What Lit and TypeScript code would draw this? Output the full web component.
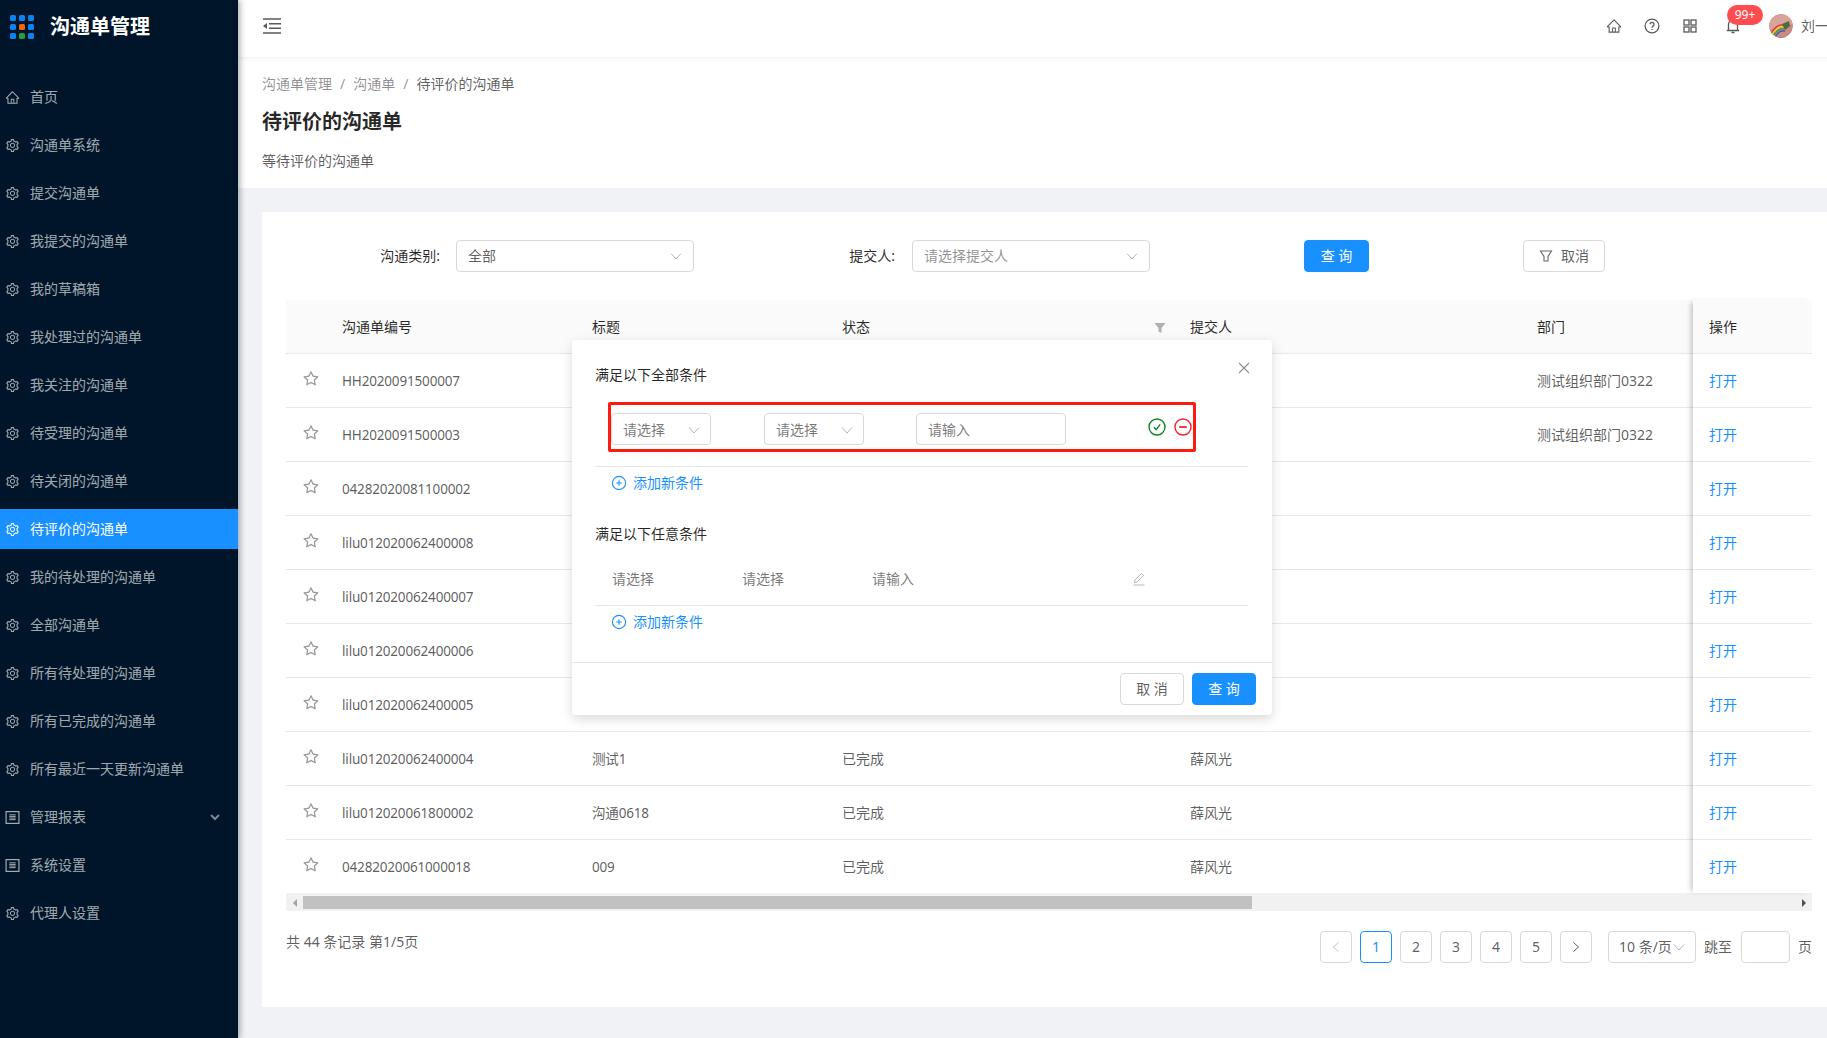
import { LitElement, html, css } from "lit";
import { customElement } from "lit/decorators.js";

const HOME = "M946.5 505L560.1 118.8l-25.9-25.9a31.5 31.5 0 0 0-44.4 0L77.5 505a63.9 63.9 0 0 0-18.8 46c.4 35.2 29.7 63.3 64.9 63.3h42.5V940h691.8V614.3h43.4c17.1 0 33.2-6.7 45.3-18.8a63.6 63.6 0 0 0 18.7-45.3c0-17-6.7-33.1-18.8-45.2zM568 868H456V664h112v204zm217.9-325.7V868H632V640c0-22.1-17.9-40-40-40H432c-22.1 0-40 17.9-40 40v228H238.1V542.3h-96l370-369.7 23.1 23.1L882 542.3h-96.1z";
const SETTING = "M924.8 625.7l-65.5-56c3.1-19 4.7-38.4 4.7-57.8s-1.6-38.8-4.7-57.8l65.5-56a32.03 32.03 0 0 0 9.3-35.2l-.9-2.6a443.74 443.74 0 0 0-79.7-137.9l-1.8-2.1a32.12 32.12 0 0 0-35.1-9.5l-81.3 28.9c-30-24.6-63.5-44-99.7-57.6l-15.7-85a32.05 32.05 0 0 0-25.8-25.7l-2.7-.5c-52.1-9.4-106.9-9.4-159 0l-2.7.5a32.05 32.05 0 0 0-25.8 25.7l-15.8 85.4a351.86 351.86 0 0 0-99 57.4l-81.9-29.1a32 32 0 0 0-35.1 9.5l-1.8 2.1a446.02 446.02 0 0 0-79.7 137.9l-.9 2.6c-4.5 12.5-.8 26.5 9.3 35.2l66.3 56.6c-3.1 18.8-4.6 38-4.6 57.1 0 19.2 1.5 38.4 4.6 57.1L99 625.5a32.03 32.03 0 0 0-9.3 35.2l.9 2.6c18.1 50.4 44.9 96.9 79.7 137.9l1.8 2.1a32.12 32.12 0 0 0 35.1 9.5l81.9-29.1c29.8 24.5 63.1 43.9 99 57.4l15.8 85.4a32.05 32.05 0 0 0 25.8 25.7l2.7.5a449.4 449.4 0 0 0 159 0l2.7-.5a32.05 32.05 0 0 0 25.8-25.7l15.7-85a350 350 0 0 0 99.7-57.6l81.3 28.9a32 32 0 0 0 35.1-9.5l1.8-2.1c34.8-41.1 61.6-87.5 79.7-137.9l.9-2.6c4.5-12.3.8-26.3-9.3-35zM788.3 465.9c2.5 15.1 3.8 30.6 3.8 46.1s-1.3 31-3.8 46.1l-6.6 40.1 74.7 63.9a370.03 370.03 0 0 1-42.6 73.6L721 702.8l-31.4 25.8c-23.9 19.6-50.5 35-79.3 45.8l-38.1 14.3-17.9 97a377.5 377.5 0 0 1-85 0l-17.9-97.2-37.8-14.5c-28.5-10.8-55-26.2-78.7-45.7l-31.4-25.9-93.4 33.2c-17-22.9-31.2-47.6-42.6-73.6l75.5-64.5-6.5-40c-2.4-14.9-3.7-30.3-3.7-45.5 0-15.3 1.2-30.6 3.7-45.5l6.5-40-75.5-64.5c11.3-26.1 25.6-50.7 42.6-73.6l93.4 33.2 31.4-25.9c23.7-19.5 50.2-34.9 78.7-45.7l37.9-14.3 17.9-97.2c28.1-3.2 56.8-3.2 85 0l17.9 97 38.1 14.3c28.7 10.8 55.4 26.2 79.3 45.8l31.4 25.8 92.8-32.9c17 22.9 31.2 47.6 42.6 73.6L781.8 426l6.5 39.9zM512 326c-97.2 0-176 78.8-176 176s78.8 176 176 176 176-78.8 176-176-78.8-176-176-176zm79.2 255.2A111.6 111.6 0 0 1 512 614c-29.9 0-58-11.7-79.2-32.8A111.6 111.6 0 0 1 400 502c0-29.9 11.7-58 32.8-79.2C454 401.6 482.1 390 512 390c29.9 0 58 11.6 79.2 32.8A111.6 111.6 0 0 1 624 502c0 29.9-11.7 58-32.8 79.2z";
const STAR = "M908.1 353.1l-253.9-36.9L540.7 86.1c-3.1-6.3-8.2-11.4-14.5-14.5-15.8-7.8-35-1.3-42.9 14.5L369.8 316.2l-253.9 36.9c-7 1-13.4 4.3-18.3 9.3a32.05 32.05 0 0 0 .6 45.3l183.7 179.1-43.4 252.9a31.95 31.95 0 0 0 46.4 33.7L512 754l227.1 119.4c6.2 3.3 13.4 4.4 20.3 3.2 17.4-3 29.1-19.5 26.1-36.9l-43.4-252.9 183.7-179.1c5-4.9 8.3-11.3 9.3-18.3 2.7-17.5-9.5-33.7-27-36.3zM664.8 561.6l36.1 210.3L512 672.7 323.1 772l36.1-210.3-152.8-149L417.6 382 512 190.7 606.4 382l211.2 30.7-152.8 148.9z";

const ant = (d: string, cls: string) => html`<svg class=${cls} viewBox="0 0 1024 1024"><path d=${d}></path></svg>`;

const chev = () => html`<svg class="chev" viewBox="0 0 12 12"><path d="M1 3.5 L6 9 L11 3.5"></path></svg>`;
const addIcon = () => html`<svg class="add-ic" viewBox="0 0 16 16"><circle cx="8" cy="8" r="6.6"></circle><path d="M8 5.2 V10.8 M5.2 8 H10.8"></path></svg>`;
const sheet = () => html`<svg class="side-ic" viewBox="0 0 14 14"><rect x="1" y="1.5" width="12" height="11" fill="none" stroke="currentColor" stroke-width="1.1"></rect><path d="M4 4.5H10M4 6H10M4 7.5H10M4 9H10" stroke="currentColor" stroke-width=".9" fill="none"></path></svg>`;

const MENU: { t: string; icon: string; active?: boolean; more?: boolean }[] = [
  { t: "首页", icon: "home" },
  { t: "沟通单系统", icon: "gear" },
  { t: "提交沟通单", icon: "gear" },
  { t: "我提交的沟通单", icon: "gear" },
  { t: "我的草稿箱", icon: "gear" },
  { t: "我处理过的沟通单", icon: "gear" },
  { t: "我关注的沟通单", icon: "gear" },
  { t: "待受理的沟通单", icon: "gear" },
  { t: "待关闭的沟通单", icon: "gear" },
  { t: "待评价的沟通单", icon: "gear", active: true },
  { t: "我的待处理的沟通单", icon: "gear" },
  { t: "全部沟通单", icon: "gear" },
  { t: "所有待处理的沟通单", icon: "gear" },
  { t: "所有已完成的沟通单", icon: "gear" },
  { t: "所有最近一天更新沟通单", icon: "gear" },
  { t: "管理报表", icon: "sheet", more: true },
  { t: "系统设置", icon: "sheet" },
  { t: "代理人设置", icon: "gear" },
];

const ROWS = [
  { id: "HH2020091500007", title: "", status: "", user: "", dept: "测试组织部门0322" },
  { id: "HH2020091500003", title: "", status: "", user: "", dept: "测试组织部门0322" },
  { id: "04282020081100002", title: "", status: "", user: "", dept: "" },
  { id: "lilu012020062400008", title: "", status: "", user: "", dept: "" },
  { id: "lilu012020062400007", title: "", status: "", user: "", dept: "" },
  { id: "lilu012020062400006", title: "", status: "", user: "", dept: "" },
  { id: "lilu012020062400005", title: "", status: "", user: "", dept: "" },
  { id: "lilu012020062400004", title: "测试1", status: "已完成", user: "薛风光", dept: "" },
  { id: "lilu012020061800002", title: "沟通0618", status: "已完成", user: "薛风光", dept: "" },
  { id: "04282020061000018", title: "009", status: "已完成", user: "薛风光", dept: "" },
];

@customElement("app-root")
export class AppRoot extends LitElement {
  static styles = css`
    :host {
      display: flex;
      width: 1827px;
      height: 1038px;
      overflow: hidden;
      background: #f0f2f5;
      font-family: "Noto Sans", "Noto Sans CJK SC", sans-serif;
      font-size: 14px;
      line-height: 22px;
      color: rgba(0, 0, 0, 0.65);
    }
    svg { display: block; flex: none; }

    .side {
      flex: 0 0 238px;
      height: 1038px;
      background: #001529;
      box-shadow: 2px 0 6px rgba(0, 21, 41, 0.35);
      position: relative;
      z-index: 2;
    }
    .logo { display: flex; align-items: center; height: 54px; padding-left: 10px; }
    .dots { display: grid; grid-template-columns: repeat(3, 6px); gap: 3px; }
    .dots i { display: block; width: 6px; height: 6px; border-radius: 1.5px; background: #0a84f0; }
    .dots i.o { background: #f0640a; }
    .dots i.g { background: #1fa03a; }
    .logo b { margin-left: 16px; font-size: 20px; line-height: 28px; font-weight: 700; color: #fff; }
    .menu { padding-top: 23px; }
    .mi {
      display: flex;
      align-items: center;
      height: 40px;
      margin-bottom: 8px;
      padding-left: 5px;
      color: rgba(255, 255, 255, 0.65);
    }
    .mi.on { background: #1890ff; color: #fff; }
    .mi span { margin-left: 10px; flex: 1; }
    .side-ic { width: 15px; height: 15px; fill: currentColor; }
    .mi .down { width: 10px; height: 10px; margin-right: 18px; fill: none; stroke: currentColor; stroke-width: 2; opacity: 0.75; }

    .main { flex: 0 0 1622px; display: flex; flex-direction: column; }
    .top {
      height: 57px;
      box-sizing: border-box;
      background: #fff;
      box-shadow: 0 1px 4px rgba(0, 21, 41, 0.08);
      display: flex;
      align-items: center;
      padding: 0 31px 6px 25px;
      position: relative;
      z-index: 1;
      flex: none;
    }
    .fold { width: 18px; height: 16px; }
    .fold path { fill: none; stroke: #595959; stroke-width: 1.6; }
    .fold polygon { fill: #595959; }
    .tools { margin-left: auto; display: flex; align-items: center; color: rgba(0, 0, 0, 0.65); }
    .tb { width: 38px; height: 38px; display: flex; align-items: center; justify-content: center; position: relative; }
    .tb svg { width: 16px; height: 16px; fill: currentColor; }
    .tb.bell { margin-left: 5px; }
    .stroke { fill: none !important; stroke: currentColor; stroke-width: 1.3; }
    .badge {
      position: absolute;
      left: 13px;
      top: -2px;
      width: 36px;
      height: 20px;
      border-radius: 10px;
      background: #ff4d4f;
      color: #fff;
      font-size: 12px;
      line-height: 20px;
      text-align: center;
    }
    .avatar { width: 24px; height: 24px; border-radius: 50%; margin-left: 17px; }
    .uname { margin-left: 8px; }

    .head { background: #fff; padding: 16px 24px; height: 131px; box-sizing: border-box; flex: none; }
    .crumb { line-height: 22px; color: rgba(0, 0, 0, 0.45); display: flex; }
    .crumb i { font-style: normal; margin: 0 8px; }
    .crumb em { font-style: normal; color: rgba(0, 0, 0, 0.65); }
    .head h1 { margin: 13px 0 0; font-size: 20px; line-height: 28px; font-weight: 600; color: rgba(0, 0, 0, 0.85); }
    .head p { margin: 14px 0 0; line-height: 22px; }

    .card {
      margin: 24px;
      height: 795px;
      box-sizing: border-box;
      padding: 28px 24px 0;
      background: #fff;
      position: relative;
    }
    .filter { display: flex; align-items: center; height: 32px; margin-bottom: 28px; }
    .flabel { text-align: right; color: rgba(0, 0, 0, 0.85); }
    .fl1 { width: 154px; margin-right: 16px; word-spacing: 1px; }
    .fl2 { width: 201px; margin-right: 17px; }
    .sel {
      display: flex;
      align-items: center;
      justify-content: space-between;
      height: 32px;
      box-sizing: border-box;
      border: 1px solid #d9d9d9;
      border-radius: 4px;
      padding: 0 11px;
      background: #fff;
    }
    .sel.big { width: 238px; }
    .sel.ph { color: rgba(0, 0, 0, 0.45); }
    .chev { width: 12px; height: 12px; fill: none; stroke: rgba(0, 0, 0, 0.3); stroke-width: 1; }
    .btn {
      height: 32px;
      box-sizing: border-box;
      border-radius: 4px;
      display: flex;
      align-items: center;
      justify-content: center;
      border: 1px solid #d9d9d9;
      background: #fff;
    }
    .btn.pri { background: #1890ff; border-color: #1890ff; color: #fff; }
    .q1 { width: 65px; margin-left: 154px; }
    .c1 { width: 82px; margin-left: 154px; gap: 8px; }
    .funnel { width: 14px; height: 14px; fill: none; stroke: rgba(0, 0, 0, 0.6); stroke-width: 1.1; }

    .table { display: flex; }
    .tmain { flex: 0 0 1407px; }
    .tfix { flex: 0 0 119px; box-shadow: -4px 0 5px -2px rgba(0, 0, 0, 0.22); position: relative; }
    .row {
      display: grid;
      grid-template-columns: 56px 250px 250px 348px 347px 156px;
      height: 54px;
      box-sizing: border-box;
      border-bottom: 1px solid #e8e8e8;
      align-items: center;
    }
    .tfix .row { grid-template-columns: 1fr; padding-left: 16px; }
    .row.hd { background: #fafafa; color: rgba(0, 0, 0, 0.85); }
    .tbody .row:last-child { border-bottom: 0; height: 53px; }
    .star { width: 18px; height: 18px; fill: #999; margin: -4px 0 0 16px; }
    .lat { font-size: 13.5px; letter-spacing: -0.17px; }
    .flt { display: flex; align-items: center; justify-content: space-between; padding-right: 24px; }
    .flt svg { width: 12px; height: 12px; fill: #b0b0b0; margin-top: 2px; }
    a.open { color: #1890ff; text-decoration: none; }

    .sbar { display: flex; align-items: stretch; height: 18px; box-sizing: border-box; padding: 3px 0 2px; background: #f1f1f1; }
    .sbar .arr { flex: 0 0 17px; display: flex; align-items: center; justify-content: center; }
    .sbar .arr svg { width: 6px; height: 8px; fill: #505050; }
    .sbar .arr.l svg { fill: #a3a3a3; }
    .sbar .thumb { flex: 0 0 949px; background: #c1c1c1; }
    .sbar .sp { flex: 1; }

    .pager { display: flex; align-items: flex-start; margin-top: 20px; }
    .total { line-height: 22px; }
    .pgs { margin-left: auto; display: flex; align-items: center; height: 32px; }
    .pg {
      width: 32px;
      height: 32px;
      box-sizing: border-box;
      border: 1px solid #d9d9d9;
      border-radius: 4px;
      margin-right: 8px;
      display: flex;
      align-items: center;
      justify-content: center;
    }
    .pg.cur { border-color: #1890ff; color: #1890ff; }
    .pg svg { width: 10px; height: 12px; fill: none; stroke: rgba(0, 0, 0, 0.65); stroke-width: 1; }
    .pg.dis svg { stroke: rgba(0, 0, 0, 0.25); }
    .pg.nx { margin-right: 16px; }
    .size {
      width: 88px;
      height: 32px;
      box-sizing: border-box;
      border: 1px solid #d9d9d9;
      border-radius: 4px;
      display: flex;
      align-items: center;
      padding-left: 10px;
      white-space: nowrap;
    }
    .size .chev { margin-left: 1px; }
    .jump { margin-left: 8px; }
    .jbox { width: 49px; height: 32px; box-sizing: border-box; border: 1px solid #d9d9d9; border-radius: 4px; margin: 0 8px 0 9px; }

    .pop {
      position: absolute;
      left: 310px;
      top: 128px;
      width: 700px;
      background: #fff;
      border-radius: 4px;
      box-shadow: 0 4px 12px rgba(0, 0, 0, 0.15);
      z-index: 3;
      box-sizing: border-box;
      padding-top: 24px;
    }
    .x { position: absolute; left: 666px; top: 22px; width: 12px; height: 12px; fill: none; stroke: rgba(0, 0, 0, 0.45); stroke-width: 1.1; }
    .pb { padding-left: 23px; }
    .pop h3 { margin: 0; font-size: 14px; line-height: 22px; font-weight: 400; color: rgba(0, 0, 0, 0.85); }
    .pop h3.second { margin-top: 24px; }
    .redbox {
      margin: 16px 0 14px 13px;
      width: 588px;
      height: 50px;
      box-sizing: border-box;
      border: 3px solid #ff1a10;
      border-radius: 2px;
      display: flex;
      align-items: center;
      padding-top: 4px;
    }
    .sel.sm { width: 100px; margin-right: 53px; padding: 1px 10px 0 11px; color: rgba(0, 0, 0, 0.55); }
    .sel.sm2 { margin-right: 52px; }
    .inp {
      width: 150px;
      height: 32px;
      box-sizing: border-box;
      border: 1px solid #d9d9d9;
      border-radius: 4px;
      padding: 1px 0 0 11px;
      line-height: 30px;
      color: rgba(0, 0, 0, 0.55);
      margin-right: 82px;
    }
    .ok, .del { width: 18px; height: 18px; fill: none; stroke-width: 1.4; margin-top: -4px; }
    .ok { stroke: #14861f; }
    .del { stroke: #f5222d; margin-left: 8px; }
    .pdiv { width: 653px; height: 1px; background: #e8e8e8; }
    .add { display: flex; align-items: center; height: 32px; padding-left: 16px; color: #1890ff; gap: 6px; }
    .add-ic { width: 16px; height: 16px; fill: none; stroke: #1890ff; stroke-width: 1.1; }
    .cond {
      display: grid;
      grid-template-columns: 130px 130px 260px auto;
      align-items: center;
      padding: 23px 0 15px 17px;
      line-height: 22px;
      color: rgba(0, 0, 0, 0.55);
    }
    .pen { width: 14px; height: 14px; fill: none; stroke: rgba(0, 0, 0, 0.28); stroke-width: 1; }
    .pf {
      margin-top: 24px;
      border-top: 1px solid #e8e8e8;
      padding: 10px 16px 10px 0;
      display: flex;
      justify-content: flex-end;
      gap: 8px;
    }
    .pf .btn { width: 64px; }
  `;

  private menu() {
    return MENU.map(
      (m) => html`<div class="mi ${m.active ? "on" : ""}">
        ${m.icon === "home" ? ant(HOME, "side-ic") : m.icon === "gear" ? ant(SETTING, "side-ic") : sheet()}
        <span>${m.t}</span>
        ${m.more ? html`<svg class="down" viewBox="0 0 10 10"><path d="M1 3 L5 7 L9 3"></path></svg>` : ""}
      </div>`
    );
  }

  render() {
    return html`
      <aside class="side">
        <div class="logo">
          <div class="dots"><i></i><i></i><i></i><i></i><i class="o"></i><i></i><i></i><i class="g"></i><i></i></div>
          <b>沟通单管理</b>
        </div>
        <nav class="menu">${this.menu()}</nav>
      </aside>
      <div class="main">
        <header class="top">
          <svg class="fold" viewBox="0 0 18 16">
            <path d="M0 1H18M6 5.7H18M6 10.3H18M0 15H18"></path>
            <polygon points="0,8 4,5 4,11"></polygon>
          </svg>
          <div class="tools">
            <div class="tb">${ant(HOME, "")}</div>
            <div class="tb">
              <svg class="stroke" viewBox="0 0 16 16"><circle cx="8" cy="8" r="6.9"></circle><path d="M6 6.3a2 2 0 1 1 3 1.8c-.7.4-1 .8-1 1.6M8 11v1"></path></svg>
            </div>
            <div class="tb">
              <svg class="stroke" viewBox="0 0 16 16"><rect x="2" y="2" width="5" height="5"></rect><rect x="9" y="2" width="5" height="5"></rect><rect x="2" y="9" width="5" height="5"></rect><rect x="9" y="9" width="5" height="5"></rect></svg>
            </div>
            <div class="tb bell">
              <svg class="stroke" viewBox="0 0 16 16"><path d="M3.5 12.5V6.5a4.5 4.5 0 0 1 9 0v6M1.8 12.5H14.2M6.5 14.5h3"></path></svg>
              <span class="badge">99+</span>
            </div>
            <svg class="avatar" viewBox="0 0 24 24">
              <defs><clipPath id="av"><circle cx="12" cy="12" r="12"></circle></clipPath></defs>
              <g clip-path="url(#av)" fill="none">
                <rect width="24" height="24" fill="#c98a84"></rect>
                <path d="M0 0H24V10L0 16Z" fill="#d8a39c"></path>
                <path d="M2 20Q7 10 14 11" stroke="#e03030" stroke-width="1.3"></path>
                <path d="M3 21Q8 12 15 13" stroke="#f0d020" stroke-width="1.3"></path>
                <path d="M4 22Q9 14 15 15" stroke="#2f9e44" stroke-width="1.3"></path>
                <path d="M6 23Q10 16 16 17" stroke="#3050c0" stroke-width="1.3"></path>
                <path d="M13 10L20 7L21 12L16 16Z" fill="#4f6b3a"></path>
                <path d="M8 23H24V24H8Z" fill="#b56f80"></path>
              </g>
            </svg>
            <span class="uname">刘一</span>
          </div>
        </header>

        <section class="head">
          <div class="crumb">沟通单管理<i>/</i>沟通单<i>/</i><em>待评价的沟通单</em></div>
          <h1>待评价的沟通单</h1>
          <p>等待评价的沟通单</p>
        </section>

        <section class="card">
          <div class="filter">
            <label class="flabel fl1">沟通类别:</label>
            <div class="sel big">全部${chev()}</div>
            <label class="flabel fl2">提交人:</label>
            <div class="sel big ph">请选择提交人${chev()}</div>
            <div class="btn pri q1">查 询</div>
            <div class="btn c1">
              <svg class="funnel" viewBox="0 0 14 14"><path d="M1.5 2H12.5L9 7.5V12H5V7.5Z"></path></svg>取消
            </div>
          </div>

          <div class="table">
            <div class="tmain">
              <div class="row hd">
                <div></div><div>沟通单编号</div><div>标题</div>
                <div class="flt">状态<svg viewBox="0 0 12 12"><path d="M0.5 1H11.5L7.5 6V11L4.5 9.5V6Z"></path></svg></div>
                <div>提交人</div><div>部门</div>
              </div>
              <div class="tbody">
                ${ROWS.map(
                  (r) => html`<div class="row">
                    ${ant(STAR, "star")}
                    <div class="lat">${r.id}</div><div class="lat">${r.title}</div><div>${r.status}</div><div>${r.user}</div><div>${r.dept}</div>
                  </div>`
                )}
              </div>
            </div>
            <div class="tfix">
              <div class="row hd"><div>操作</div></div>
              <div class="tbody">${ROWS.map(() => html`<div class="row"><a class="open">打开</a></div>`)}</div>
            </div>
          </div>

          <div class="sbar">
            <div class="arr l"><svg viewBox="0 0 6 8"><path d="M5 0V8L1 4Z"></path></svg></div>
            <div class="thumb"></div>
            <div class="sp"></div>
            <div class="arr"><svg viewBox="0 0 6 8"><path d="M1 0V8L5 4Z"></path></svg></div>
          </div>

          <div class="pager">
            <div class="total">共 44 条记录 第1/5页</div>
            <div class="pgs">
              <div class="pg dis"><svg viewBox="0 0 10 12"><path d="M7.5 1.5 L2.5 6 L7.5 10.5"></path></svg></div>
              <div class="pg cur">1</div>
              <div class="pg">2</div>
              <div class="pg">3</div>
              <div class="pg">4</div>
              <div class="pg">5</div>
              <div class="pg nx"><svg viewBox="0 0 10 12"><path d="M2.5 1.5 L7.5 6 L2.5 10.5"></path></svg></div>
              <div class="size">10 条/页${chev()}</div>
              <span class="jump">跳至</span>
              <div class="jbox"></div>
              <span>页</span>
            </div>
          </div>

          <div class="pop">
            <svg class="x" viewBox="0 0 12 12"><path d="M1 1L11 11M11 1L1 11"></path></svg>
            <div class="pb">
              <h3>满足以下全部条件</h3>
              <div class="redbox">
                <div class="sel sm">请选择${chev()}</div>
                <div class="sel sm sm2">请选择${chev()}</div>
                <div class="inp">请输入</div>
                <svg class="ok" viewBox="0 0 18 18"><circle cx="9" cy="9" r="8"></circle><path d="M5.8 9.2L8.2 11.6L12.2 6.4"></path></svg>
                <svg class="del" viewBox="0 0 18 18"><circle cx="9" cy="9" r="8"></circle><path d="M5.2 9H12.8" stroke-width="1.8"></path></svg>
              </div>
              <div class="pdiv"></div>
              <div class="add">${addIcon()}添加新条件</div>
              <h3 class="second">满足以下任意条件</h3>
              <div class="cond">
                <span>请选择</span><span>请选择</span><span>请输入</span>
                <svg class="pen" viewBox="0 0 14 14"><path d="M2.5 10.5L3 8L9.5 1.5L11.5 3.5L5 10Z M1.5 13H12.5"></path></svg>
              </div>
              <div class="pdiv"></div>
              <div class="add">${addIcon()}添加新条件</div>
            </div>
            <div class="pf">
              <div class="btn">取 消</div>
              <div class="btn pri">查 询</div>
            </div>
          </div>
        </section>
      </div>
    `;
  }
}
